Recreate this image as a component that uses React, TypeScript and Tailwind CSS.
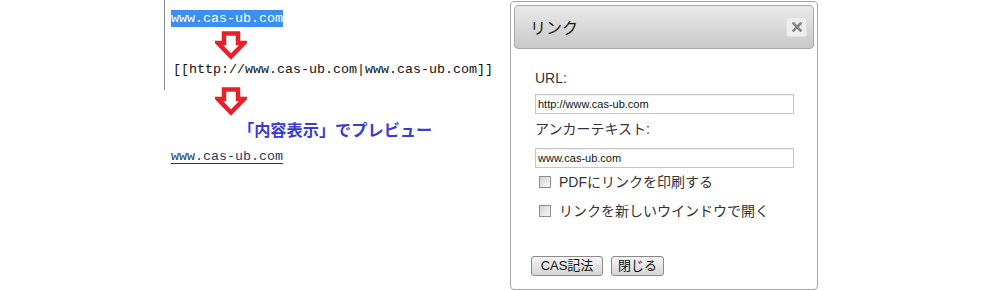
import React from "react";

function DownArrow() {
  return (
    <svg width="32" height="29" viewBox="0 0 32 29" className="block">
      <polygon
        points="9,2.5 23,2.5 23,12 29,12 16,25.5 3,12 9,12"
        fill="#ffffff"
        stroke="#e8202a"
        strokeWidth="4.5"
        strokeLinejoin="miter"
      />
    </svg>
  );
}

function Checkbox() {
  return (
    <span className="inline-block w-[12px] h-[12px] border border-[#8e8e8e] bg-gradient-to-br from-[#d4d4d4] to-[#f8f8f8] shrink-0" />
  );
}

export default function App() {
  const sans = { fontFamily: '"Liberation Sans", "Noto Sans CJK JP", sans-serif' };
  const mono = { fontFamily: '"Liberation Mono", "Noto Sans CJK JP", monospace' };
  return (
    <div className="w-[1000px] h-[290px] bg-white flex overflow-hidden">
      <div className="w-[164px] shrink-0" />
      {/* left column */}
      <div className="w-[346px] shrink-0 flex flex-col">
        <div className="h-[90px] border-l border-[#8a8a8a] pl-[6px] flex flex-col text-[13.33px]" style={mono}>
          <div className="mt-[10px] h-[17px] leading-[17px]">
            <span className="bg-[#3b8ff0] text-white inline-block h-[17px] leading-[17px] w-[112px]">www.cas-ub.com</span>
          </div>
          <div className="ml-[44px] mt-[4px]">
            <DownArrow />
          </div>
          <div className="mt-[2px] ml-[2px] h-[16px] leading-[16px] text-[#111] whitespace-nowrap">
            [[http://www.cas-ub.com|www.cas-ub.com]]
          </div>
        </div>
        <div className="pl-[7px] flex flex-col">
          <div className="ml-[44px] -mt-[3px]">
            <DownArrow />
          </div>
          <div
            className="ml-[67px] mt-[3px] h-[20px] leading-[20px] text-[16.2px] font-bold text-[#3b3bcd] whitespace-nowrap"
            style={{ fontFamily: '"Noto Sans CJK JP", sans-serif' }}
          >
            「内容表示」でプレビュー
          </div>
          <div className="mt-[9px] h-[18px] leading-[18px] text-[13.33px] text-[#1d3a66]" style={mono}>
            <span className="underline underline-offset-[3px] decoration-[#1d3a66]">www.cas-ub.com</span>
          </div>
        </div>
      </div>
      {/* dialog */}
      <div
        className="w-[308px] h-[289px] mt-[1px] shrink-0 border border-[#a6a6a6] rounded-[4px] bg-white p-[3px] flex flex-col"
        style={sans}
      >
        <div className="h-[44px] rounded-[4px] border border-[#a9a9a9] bg-gradient-to-b from-[#e9e9e9] to-[#c9c9c9] flex items-center justify-between pl-[15px] pr-[6px]">
          <span className="text-[16px] text-[#1a1a1a] leading-[20px]" style={{ fontFamily: '"Noto Sans CJK JP", sans-serif' }}>
            リンク
          </span>
          <span className="w-[21px] h-[20px] rounded-[3px] bg-[#eeeeee] border border-[#e0e0e0] flex items-center justify-center">
            <svg width="10" height="10" viewBox="0 0 10 10">
              <path d="M1.5 1.5 L8.5 8.5 M8.5 1.5 L1.5 8.5" stroke="#848484" strokeWidth="2.6" strokeLinecap="square" />
            </svg>
          </span>
        </div>
        <div className="flex flex-col pl-[21px]">
          <div className="mt-[19px] h-[20px] leading-[20px] text-[14px] text-[#333]">URL:</div>
          <div className="mt-[6px] w-[259px] h-[20px] border border-[#c6c6c6] shadow-[inset_0_1px_1px_rgba(0,0,0,0.06)] flex items-center pl-[2px] text-[11px] text-[#111] leading-[18px]">
            http://www.cas-ub.com
          </div>
          <div className="mt-[5px] h-[20px] leading-[20px] text-[14px] text-[#333]">アンカーテキスト:</div>
          <div className="mt-[9px] w-[259px] h-[20px] border border-[#c6c6c6] shadow-[inset_0_1px_1px_rgba(0,0,0,0.06)] flex items-center pl-[2px] text-[11px] text-[#111] leading-[18px]">
            www.cas-ub.com
          </div>
          <div className="mt-[4px] h-[20px] flex items-center pl-[4px] gap-[8px] text-[14px] text-[#333]">
            <Checkbox />
            <span className="leading-[20px]">PDFにリンクを印刷する</span>
          </div>
          <div className="mt-[9px] h-[20px] flex items-center pl-[4px] gap-[8px] text-[14px] text-[#333]">
            <Checkbox />
            <span className="leading-[20px]">リンクを新しいウインドウで開く</span>
          </div>
          <div className="mt-[35px] flex gap-[8px] -ml-[4px]">
            <span className="w-[72px] h-[20px] rounded-[3px] border border-[#8a8a8a] bg-gradient-to-b from-[#f4f4f4] to-[#d6d6d6] flex items-center justify-center text-[13px] text-[#111] leading-[18px]">
              CAS記法
            </span>
            <span className="w-[53px] h-[20px] rounded-[3px] border border-[#8a8a8a] bg-gradient-to-b from-[#f4f4f4] to-[#d6d6d6] flex items-center justify-center text-[13px] text-[#111] leading-[18px]">
              閉じる
            </span>
          </div>
        </div>
      </div>
    </div>
  );
}
